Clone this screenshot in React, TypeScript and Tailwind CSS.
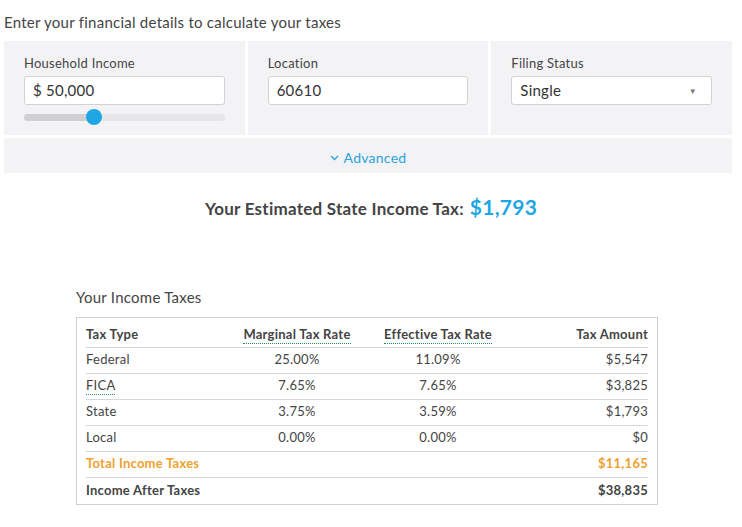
import React from "react";

const rows = [
  { type: "Federal", marginal: "25.00%", effective: "11.09%", amount: "$5,547" },
  { type: "FICA", marginal: "7.65%", effective: "7.65%", amount: "$3,825", dotted: true },
  { type: "State", marginal: "3.75%", effective: "3.59%", amount: "$1,793" },
  { type: "Local", marginal: "0.00%", effective: "0.00%", amount: "$0" },
];

const Dotted = ({ children }: { children: React.ReactNode }) => (
  <span className="border-b border-dotted border-[#1f8f6a] pb-[1px]">{children}</span>
);

export default function App() {
  return (
    <div className="w-[742px] min-h-[527px] bg-white text-[#333] tracking-[0.25px] font-['Lato','Open_Sans',sans-serif]">
      <div className="pl-1 pt-[12px] text-[15px] leading-[20px] text-[#444]">
        Enter your financial details to calculate your taxes
      </div>

      <div className="ml-1 mt-[9px] w-[728px] flex flex-col gap-[3px]">
        <div className="grid grid-cols-3 gap-[3px]">
          <div className="bg-[#f3f3f5] h-[94px] px-5 pt-[14px]">
            <div className="text-[13px] leading-[16px] text-[#444]">Household Income</div>
            <div className="mt-[5px] h-[29px] bg-white border border-[#d2d2d2] rounded-[3px] flex items-center px-2 text-[15px] text-[#333]">
              $ 50,000
            </div>
            <div className="relative mt-[9px] h-[7px] rounded-full bg-[#e6e6e8]">
              <div className="absolute left-0 top-0 h-full w-[70px] rounded-l-full bg-[#d0d0d2]" />
              <div className="absolute left-[62px] top-[-5px] w-4 h-4 rounded-full bg-[#1ea7e4]" />
            </div>
          </div>
          <div className="bg-[#f3f3f5] h-[94px] px-5 pt-[14px]">
            <div className="text-[13px] leading-[16px] text-[#444]">Location</div>
            <div className="mt-[5px] h-[29px] bg-white border border-[#d2d2d2] rounded-[3px] flex items-center px-2 text-[15px] text-[#333]">
              60610
            </div>
          </div>
          <div className="bg-[#f3f3f5] h-[94px] px-5 pt-[14px]">
            <div className="text-[13px] leading-[16px] text-[#444]">Filing Status</div>
            <div className="mt-[5px] h-[29px] bg-white border border-[#d2d2d2] rounded-[3px] flex items-center justify-between px-2 text-[15px] text-[#333]">
              <span>Single</span>
              <span className="text-[8px] text-[#777] pr-[6px]">▼</span>
            </div>
          </div>
        </div>
        <div className="bg-[#f3f3f5] h-[35px] pt-[4px] flex items-center justify-center gap-[5px] text-[14px] text-[#2aa3dc]">
          <svg width="9" height="6" viewBox="0 0 9 6" fill="none" stroke="#2aa3dc" strokeWidth="1.3">
            <path d="M1 1l3.5 3.5L8 1" />
          </svg>
          <span>Advanced</span>
        </div>
      </div>

      <div className="mt-[18px] flex items-baseline justify-center gap-[6px] font-bold">
        <span className="text-[17px] text-[#444]">Your Estimated State Income Tax:</span>
        <span className="text-[21px] text-[#1ea7e4]">$1,793</span>
      </div>

      <div className="ml-[76px] mt-[64px] text-[15px] leading-[20px] text-[#444]">Your Income Taxes</div>

      <div className="ml-[76px] mt-[10px] w-[582px] border border-[#cfcfcf] px-[9px] text-[13px]">
        <div className="flex items-center h-[30px] pt-[5px] border-b border-[#d6d6d6] font-bold text-[#444]">
          <div className="w-[150px]">Tax Type</div>
          <div className="w-[122px] text-center"><Dotted>Marginal Tax Rate</Dotted></div>
          <div className="w-[160px] text-center"><Dotted>Effective Tax Rate</Dotted></div>
          <div className="flex-1 text-right">Tax Amount</div>
        </div>
        {rows.map((r) => (
          <div key={r.type} className="flex items-center h-[26px] border-b border-[#d6d6d6] text-[#444]">
            <div className="w-[150px]">{r.dotted ? <Dotted>{r.type}</Dotted> : r.type}</div>
            <div className="w-[122px] text-center">{r.marginal}</div>
            <div className="w-[160px] text-center">{r.effective}</div>
            <div className="flex-1 text-right">{r.amount}</div>
          </div>
        ))}
        <div className="flex items-center h-[26px] border-b border-[#d6d6d6] font-bold text-[#f0a030]">
          <div className="w-[150px]">Total Income Taxes</div>
          <div className="w-[122px]" />
          <div className="w-[160px]" />
          <div className="flex-1 text-right">$11,165</div>
        </div>
        <div className="flex items-center h-[26px] font-bold text-[#444]">
          <div className="w-[150px]">Income After Taxes</div>
          <div className="w-[122px]" />
          <div className="w-[160px]" />
          <div className="flex-1 text-right">$38,835</div>
        </div>
      </div>
    </div>
  );
}
